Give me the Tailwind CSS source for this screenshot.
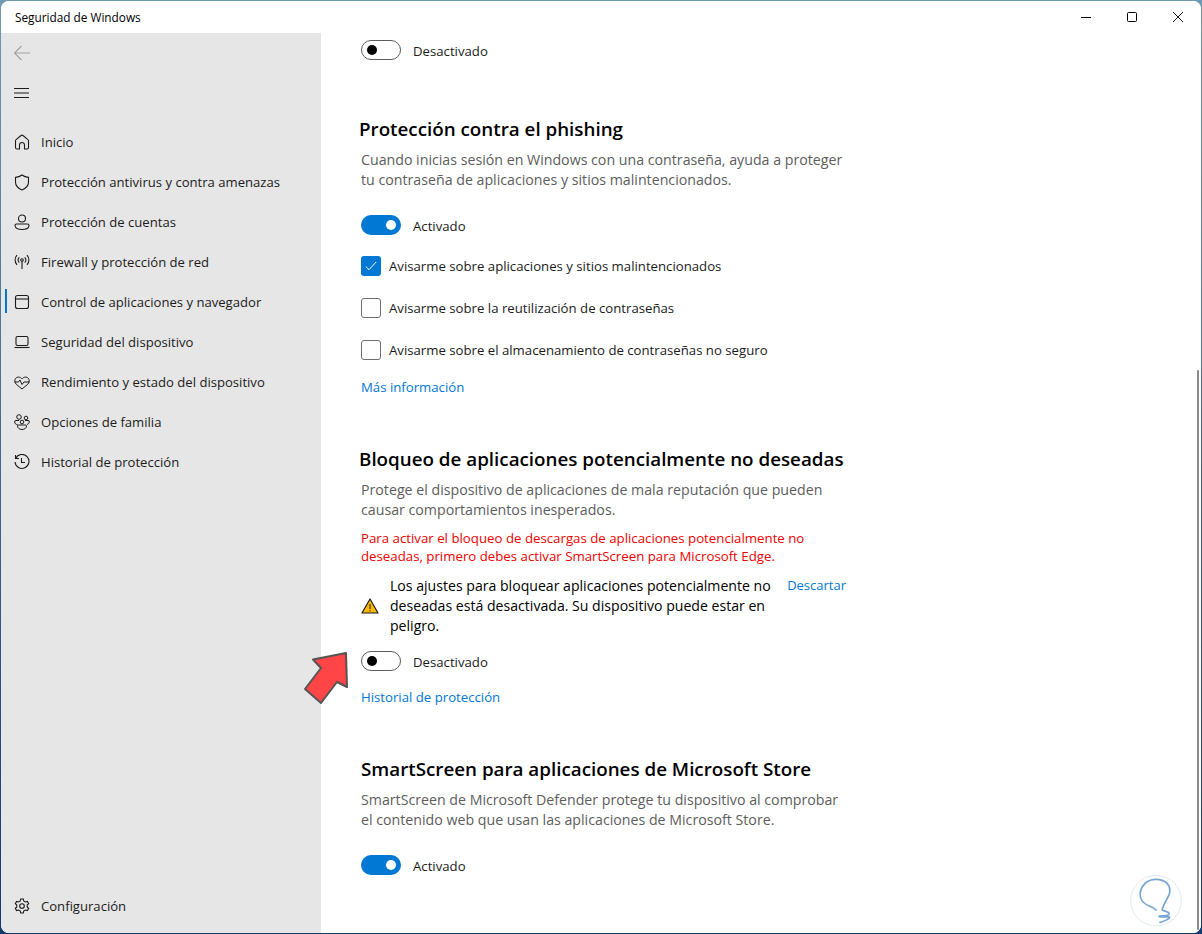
<!DOCTYPE html>
<html lang="es">
<head>
    <meta charset="UTF-8">
    <meta name="viewport" content="width=device-width, initial-scale=1.0">
    <title>Seguridad de Windows</title>
    <script src="https://cdn.jsdelivr.net/npm/@tailwindcss/browser@4"></script>
</head>
<body class="bg-[#5f8aa6] font-['Open_Sans','Noto_Sans',sans-serif] text-[13.1px] text-[#1b1b1b]">
    <div class="relative w-[1202px] h-[934px] overflow-hidden bg-gradient-to-b from-[#6f9ab3] to-[#123a6b]">
        <!-- Window -->
        <div class="absolute left-[1px] top-[1px] w-[1200px] h-[932px] rounded-[8px] overflow-hidden flex flex-col bg-white">
            <!-- Title bar -->
            <div class="h-[32px] shrink-0 flex items-center justify-between bg-white">
                <span class="pl-[14px] text-[11.8px] leading-[32px] text-black">Seguridad de Windows</span>
                <div class="flex items-center text-black">
                    <div class="w-[46px] h-[32px] flex items-center justify-center">
                        <svg width="10" height="10" viewBox="0 0 10 10" fill="none" stroke="currentColor"><path d="M0 5.5h10"/></svg>
                    </div>
                    <div class="w-[46px] h-[32px] flex items-center justify-center">
                        <svg width="10" height="10" viewBox="0 0 10 10" fill="none" stroke="currentColor"><rect x=".5" y=".5" width="9" height="9" rx="1"/></svg>
                    </div>
                    <div class="w-[46px] h-[32px] flex items-center justify-center">
                        <svg width="10" height="10" viewBox="0 0 10 10" fill="none" stroke="currentColor" stroke-width=".9"><path d="M0 0l10 10M10 0L0 10"/></svg>
                    </div>
                </div>
            </div>

            <div class="flex-1 flex min-h-0">
                <!-- Sidebar -->
                <aside class="w-[320px] shrink-0 bg-[#e6e6e6] flex flex-col">
                    <div class="h-10 flex items-center pl-[12px]">
                        <svg width="18" height="16" viewBox="0 0 18 16" fill="none" stroke="#a3a3a3" stroke-width="1.1"><path d="M17 8H1.5M8.5 1L1.5 8l7 7"/></svg>
                    </div>
                    <div class="h-10 flex items-center pl-[12px]">
                        <svg width="18" height="12" viewBox="0 0 18 12" fill="none" stroke="#1b1b1b" stroke-width="1"><path d="M1 1.5h15M1 6h15M1 10.5h15"/></svg>
                    </div>
                    <nav class="mt-[9px] flex flex-col">
                        <a class="h-10 flex items-center">
                            <span class="w-[40px] flex justify-center pl-[1px]">
                                <svg width="16" height="16" viewBox="0 0 16 16" fill="none" stroke="#1b1b1b" stroke-width="1.1"><path d="M1.500 6.800c0-.5.2-.9.600-1.200L7 1.500a1.500 1.500 0 0 1 2 0l4.900 4.100c.4.300.6.700.6 1.200v6.700a1.500 1.500 0 0 1-1.500 1.500h-2.500v-4a2.500 2.500 0 0 0-5 0v4H3a1.500 1.500 0 0 1-1.500-1.500z"/></svg>
                            </span>
                            <span class="pt-[1px]">Inicio</span>
                        </a>
                        <a class="h-10 flex items-center">
                            <span class="w-[40px] flex justify-center pl-[1px]">
                                <svg width="16" height="17" viewBox="0 0 16 17" fill="none" stroke="#1b1b1b" stroke-width="1.1"><path d="M8 1c2 1.500 4 2.200 6.500 2.400V8c0 3.500-2.300 6.300-6.500 8-4.200-1.700-6.500-4.500-6.500-8V3.400C4 3.200 6 2.500 8 1z"/></svg>
                            </span>
                            <span class="pt-[1px]">Protección antivirus y contra amenazas</span>
                        </a>
                        <a class="h-10 flex items-center">
                            <span class="w-[40px] flex justify-center pl-[1px]">
                                <svg width="16" height="17" viewBox="0 0 16 17" fill="none" stroke="#1b1b1b" stroke-width="1.1"><circle cx="8" cy="4.500" r="3.500"/><path d="M2.500 10h11a1.500 1.500 0 0 1 1.500 1.500c0 2.500-3 4-7 4s-7-1.500-7-4A1.500 1.500 0 0 1 2.500 10z"/></svg>
                            </span>
                            <span class="pt-[1px]">Protección de cuentas</span>
                        </a>
                        <a class="h-10 flex items-center">
                            <span class="w-[40px] flex justify-center pl-[1px]">
                                <svg width="16" height="16" viewBox="0 0 16 16" fill="none" stroke="#1b1b1b" stroke-width="1.1"><circle cx="8" cy="6" r="1.300"/><path d="M8 7.500V15M5.300 3.300a4 4 0 0 0 0 5.400M10.700 3.300a4 4 0 0 1 0 5.400M3 1.200a7 7 0 0 0 0 9.600M13 1.200a7 7 0 0 1 0 9.600"/></svg>
                            </span>
                            <span class="pt-[1px]">Firewall y protección de red</span>
                        </a>
                        <a class="relative h-10 flex items-center">
                            <span class="absolute left-[4px] top-[7px] w-[2px] h-[24px] bg-[#0078d4]"></span>
                            <span class="w-[40px] flex justify-center pl-[1px]">
                                <svg width="16" height="16" viewBox="0 0 16 16" fill="none" stroke="#1b1b1b" stroke-width="1.1"><rect x="1.500" y="1.500" width="13" height="13" rx="2"/><path d="M1.500 5h13"/></svg>
                            </span>
                            <span class="pt-[1px]">Control de aplicaciones y navegador</span>
                        </a>
                        <a class="h-10 flex items-center">
                            <span class="w-[40px] flex justify-center pl-[1px]">
                                <svg width="16" height="16" viewBox="0 0 16 16" fill="none" stroke="#1b1b1b" stroke-width="1.1"><rect x="2" y="2.500" width="12" height="9" rx="1.500"/><path d="M.5 13.500h15"/></svg>
                            </span>
                            <span class="pt-[1px]">Seguridad del dispositivo</span>
                        </a>
                        <a class="h-10 flex items-center">
                            <span class="w-[40px] flex justify-center pl-[1px]">
                                <svg width="16" height="16" viewBox="0 0 16 16" fill="none" stroke="#1b1b1b" stroke-width="1"><path d="M2.500 10.500L8 15l5.500-4.500c2-2 2.200-4.500.8-6.200-1.500-1.700-4.500-1.700-6.300.6C6.200 2.600 3.200 2.600 1.700 4.300.3 6 .5 8.500 2.500 10.500z"/><path d="M.5 8h4l1.500-2 2 4.500L10 8h5.500"/></svg>
                            </span>
                            <span class="pt-[1px]">Rendimiento y estado del dispositivo</span>
                        </a>
                        <a class="h-10 flex items-center">
                            <span class="w-[40px] flex justify-center pl-[1px]">
                                <svg width="16" height="16" viewBox="0 0 16 16" fill="none" stroke="#1b1b1b" stroke-width="1"><circle cx="5" cy="3" r="2.300"/><circle cx="12" cy="4" r="1.800"/><circle cx="8" cy="8" r="1.800"/><path d="M5 6.500H2A1.300 1.300 0 0 0 .7 8c0 1.500 1 2.500 3 2.700M11 6.500h3a1.300 1.300 0 0 1 1.300 1.500c0 1-.8 2-2.300 2.500M4.500 11h7a1 1 0 0 1 1 1c0 2-2 3.500-4.500 3.500S3.500 14 3.500 12a1 1 0 0 1 1-1z"/></svg>
                            </span>
                            <span class="pt-[1px]">Opciones de familia</span>
                        </a>
                        <a class="h-10 flex items-center">
                            <span class="w-[40px] flex justify-center pl-[1px]">
                                <svg width="16" height="16" viewBox="0 0 16 16" fill="none" stroke="#1b1b1b" stroke-width="1.1"><path d="M1.500 1v3.500H5M1.700 4.300A7 7 0 1 1 1 8M7.500 4v4.500H11"/></svg>
                            </span>
                            <span class="pt-[1px]">Historial de protección</span>
                        </a>
                    </nav>
                    <a class="mt-auto mb-[7px] h-10 flex items-center">
                        <span class="w-[40px] flex justify-center pl-[1px]">
                            <svg width="16" height="16" viewBox="0 0 16 16" fill="none" stroke="#1b1b1b" stroke-width="1.1"><circle cx="8" cy="8" r="2.300"/><path d="M6.700 1h2.600l.4 2 1.700 1 2-.6 1.300 2.200-1.500 1.400v2l1.500 1.400-1.300 2.200-2-.6-1.700 1-.4 2H6.700l-.4-2-1.700-1-2 .6-1.300-2.200L2.800 9V7L1.300 5.600l1.300-2.200 2 .6 1.700-1z"/></svg>
                        </span>
                        <span class="pt-[1px]">Configuración</span>
                    </a>
                </aside>

                <!-- Main content -->
                <main class="relative flex-1 min-w-0 bg-white pl-[38px] text-[13.2px] leading-[20px]">
                    <div class="pl-[2px] mt-[7px] h-[20px] flex items-center gap-[12px]">
                        <span class="w-[40px] h-[20px] rounded-full border border-[#5c5c5c] flex items-center pl-[5px]"><span class="w-[10px] h-[10px] rounded-full bg-black"></span></span>
                        <span class="pt-[1px]">Desactivado</span>
                    </div>

                    <h2 class="mt-[55px] text-[18.8px] leading-[28px] font-semibold text-black">Protección contra el phishing</h2>
                    <p class="pl-[2px] mt-[7px] w-[520px] text-[14.2px] text-[#5d5d5d]">Cuando inicias sesión en Windows con una contraseña, ayuda a proteger<br>tu contraseña de aplicaciones y sitios malintencionados.</p>

                    <div class="pl-[2px] mt-[25px] h-[20px] flex items-center gap-[12px]">
                        <span class="w-[40px] h-[20px] rounded-full bg-[#0078d4] flex items-center justify-end pr-[5px]"><span class="w-[10px] h-[10px] rounded-full bg-white"></span></span>
                        <span class="pt-[1px]">Activado</span>
                    </div>
                    <label class="pl-[2px] mt-[21px] h-[20px] flex items-center gap-[8px]">
                        <span class="w-[20px] h-[20px] rounded-[3px] bg-[#0078d4] flex items-center justify-center">
                            <svg width="12" height="10" viewBox="0 0 12 10" fill="none" stroke="#fff" stroke-width="1"><path d="M.8 5.500L4 8.700 11.200 1"/></svg>
                        </span>
                        <span>Avisarme sobre aplicaciones y sitios malintencionados</span>
                    </label>
                    <label class="pl-[2px] mt-[22px] h-[20px] flex items-center gap-[8px]">
                        <span class="w-[20px] h-[20px] rounded-[3px] border border-[#6e6e6e]"></span>
                        <span>Avisarme sobre la reutilización de contraseñas</span>
                    </label>
                    <label class="pl-[2px] mt-[22px] h-[20px] flex items-center gap-[8px]">
                        <span class="w-[20px] h-[20px] rounded-[3px] border border-[#6e6e6e]"></span>
                        <span>Avisarme sobre el almacenamiento de contraseñas no seguro</span>
                    </label>
                    <a class="block pl-[2px] mt-[17px] text-[#0078d4]">Más información</a>

                    <h2 class="mt-[48px] text-[18.8px] leading-[28px] font-semibold text-black">Bloqueo de aplicaciones potencialmente no deseadas</h2>
                    <p class="pl-[2px] mt-[7px] w-[520px] text-[14.2px] text-[#5d5d5d]">Protege el dispositivo de aplicaciones de mala reputación que pueden<br>causar comportamientos inesperados.</p>
                    <p class="pl-[2px] mt-[9px] text-[13.25px] leading-[18px] text-[#f00000]">Para activar el bloqueo de descargas de aplicaciones potencialmente no<br>deseadas, primero debes activar SmartScreen para Microsoft Edge.</p>

                    <div class="pl-[2px] mt-[11px] w-[487px] flex items-center">
                        <svg class="shrink-0" width="18" height="16" viewBox="0 0 18 16"><path d="M9 1L17 15H1z" fill="#ffb900" stroke="#1b1b1b" stroke-width="1.200" stroke-linejoin="round"/><path d="M9 6v5M9 12.200v1.200" stroke="#1b1b1b"/></svg>
                        <p class="ml-[11px] w-[397px] text-[14.1px] text-black">Los ajustes para bloquear aplicaciones potencialmente no<br>deseadas está desactivada. Su dispositivo puede estar en<br>peligro.</p>
                        <a class="self-start ml-[1px] -mt-[1px] text-[13px] text-[#0078d4]">Descartar</a>
                    </div>

                    <div class="pl-[2px] mt-[15px] h-[20px] flex items-center gap-[12px]">
                        <span class="w-[40px] h-[20px] rounded-full border border-[#5c5c5c] flex items-center pl-[5px]"><span class="w-[10px] h-[10px] rounded-full bg-black"></span></span>
                        <span class="pt-[1px]">Desactivado</span>
                    </div>
                    <a class="block pl-[2px] mt-[16px] text-[#0078d4]">Historial de protección</a>

                    <h2 class="pl-[2px] mt-[48px] text-[18.8px] leading-[28px] font-semibold text-black">SmartScreen para aplicaciones de Microsoft Store</h2>
                    <p class="pl-[2px] mt-[7px] w-[520px] text-[14.2px] text-[#5d5d5d]">SmartScreen de Microsoft Defender protege tu dispositivo al comprobar<br>el contenido web que usan las aplicaciones de Microsoft Store.</p>
                    <div class="pl-[2px] mt-[25px] h-[20px] flex items-center gap-[12px]">
                        <span class="w-[40px] h-[20px] rounded-full bg-[#0078d4] flex items-center justify-end pr-[5px]"><span class="w-[10px] h-[10px] rounded-full bg-white"></span></span>
                        <span class="pt-[1px]">Activado</span>
                    </div>

                    <!-- Scrollbar -->
                    <div class="absolute right-[2px] top-[337px] bottom-[3px] w-[2px] rounded-full bg-[#8a8a8a]"></div>
                </main>
            </div>
        </div>

        <!-- Annotation arrow -->
        <svg class="absolute left-[300px] top-[648px]" width="52" height="60" viewBox="300 648 52 60" fill="none">
            <path d="M346 653L313 659.500L321 668L305 689L321 703L337 682L347 687Z" fill="#ff4545" stroke="#555" stroke-width="2" stroke-linejoin="round"/>
        </svg>

        <!-- Watermark -->
        <svg class="absolute left-[1100px] top-[860px]" width="102" height="74" viewBox="0 0 306 222" fill="none">
            <circle cx="168" cy="122" r="76" fill="#fff" stroke="#e3ebf4" stroke-width="3"/>
            <path d="M168 150C155 135 135 140 125 120C112 95 130 60 165 58C195 57 215 75 208 102C203 118 190 130 186 150C200 155 212 158 206 164C195 170 172 165 178 170C190 172 215 168 208 174C200 182 190 184 180 187" stroke="#76a5d3" stroke-width="5" stroke-linecap="round" stroke-linejoin="round"/>
        </svg>
    </div>
</body>
</html>
